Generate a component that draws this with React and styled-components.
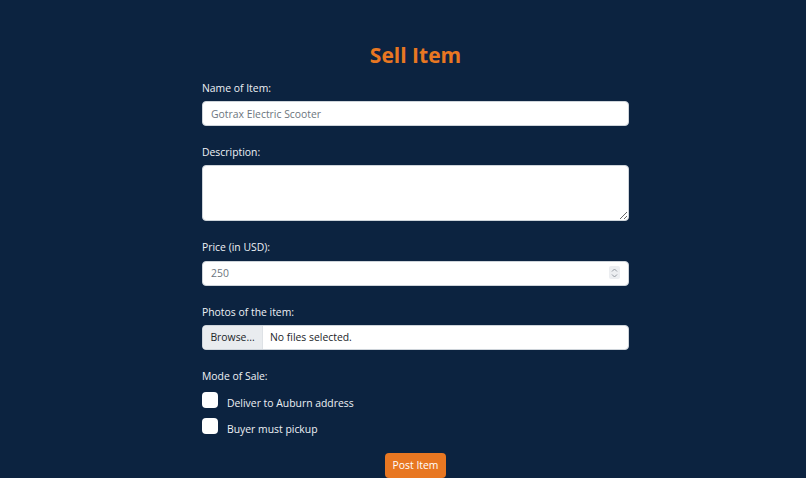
import React from "react";
import styled, { createGlobalStyle } from "styled-components";

const Global = createGlobalStyle`
  html, body { margin: 0; padding: 0; background: #0c2340; }
  body { font-family: "Open Sans", "Noto Sans", sans-serif; }
`;

const Page = styled.div`
  min-height: 478px;
  background: #0c2340;
  display: flex;
  justify-content: center;
  padding: 42px 0 0 25px;
  box-sizing: border-box;
`;

const Form = styled.form`
  width: 427px;
  display: flex;
  flex-direction: column;
`;

const Title = styled.h2`
  margin: 0 0 13px;
  text-align: center;
  color: #e87722;
  font-family: "Open Sans", sans-serif;
  font-weight: 700;
  font-size: 21px;
  line-height: 26px;
`;

const Group = styled.div`
  display: flex;
  flex-direction: column;
  margin-bottom: 19px;
`;

const Label = styled.label`
  color: #eef1f5;
  font-size: 10.4px;
  line-height: 14px;
  margin-bottom: 6px;
`;

const fieldBase = `
  box-sizing: border-box;
  width: 100%;
  background: #fff;
  border: 1px solid #ced4da;
  border-radius: 4px;
  font-family: "Open Sans", sans-serif;
  font-size: 10.4px;
  color: #212529;
  outline: none;
`;

const Input = styled.input`
  ${fieldBase}
  height: ${(p) => p.$h || 25}px;
  padding: 0 8px;
  &::placeholder { color: #6c757d; }
`;

const TextArea = styled.textarea`
  ${fieldBase}
  height: 56px;
  padding: 4px 8px;
  resize: vertical;
  display: block;
`;

const NumberWrap = styled.div`
  position: relative;
`;

const Spinner = styled.span`
  position: absolute;
  right: 9px;
  top: 6px;
  width: 11px;
  height: 13px;
  background: #eceef1;
  border-radius: 2px;
  display: flex;
  align-items: center;
  justify-content: center;
`;

const FileBox = styled.div`
  box-sizing: border-box;
  height: 25px;
  display: flex;
  align-items: stretch;
  background: #fff;
  border: 1px solid #ced4da;
  border-radius: 4px;
  overflow: hidden;
  font-size: 10.4px;
  color: #212529;
`;

const BrowseBtn = styled.span`
  width: 59px;
  background: #e9ecef;
  border-right: 1px solid #dee2e6;
  display: flex;
  align-items: center;
  justify-content: center;
  color: #212529;
`;

const FileName = styled.span`
  display: flex;
  align-items: center;
  padding-left: 7px;
`;

const CheckRow = styled.label`
  display: flex;
  align-items: center;
  gap: 9px;
  color: #eef1f5;
  font-size: 10.4px;
  line-height: 14px;
  margin-bottom: 10px;
`;

const Box = styled.span`
  width: 16px;
  height: 16px;
  background: #fff;
  border-radius: 4px;
  flex: none;
  position: relative;
  top: -3px;
`;

const Modes = styled.div`
  display: flex;
  flex-direction: column;
`;

const ModeLabel = styled(Label)`
  margin-bottom: 12px;
`;

const Submit = styled.button`
  align-self: center;
  margin-top: 6px;
  height: 25px;
  width: 61px;
  padding: 0;
  border: none;
  border-radius: 4px;
  background: #e87722;
  color: #fff;
  font-family: "Open Sans", sans-serif;
  font-size: 10.4px;
`;

export default function App() {
  return (
    <>
      <Global />
      <Page>
        <Form onSubmit={(e) => e.preventDefault()}>
          <Title>Sell Item</Title>
          <Group>
            <Label>Name of Item:</Label>
            <Input placeholder="Gotrax Electric Scooter" />
          </Group>
          <Group>
            <Label>Description:</Label>
            <TextArea />
          </Group>
          <Group>
            <Label>Price (in USD):</Label>
            <NumberWrap>
              <Input placeholder="250" $h={25} />
              <Spinner>
                <svg width="7" height="10" viewBox="0 0 7 10" fill="none" stroke="#8a9099" strokeWidth="0.9">
                  <path d="M1 3.5 L3.5 1 L6 3.5" />
                  <path d="M1 6.5 L3.5 9 L6 6.5" />
                </svg>
              </Spinner>
            </NumberWrap>
          </Group>
          <Group>
            <Label>Photos of the item:</Label>
            <FileBox>
              <BrowseBtn>Browse...</BrowseBtn>
              <FileName>No files selected.</FileName>
            </FileBox>
          </Group>
          <Modes>
            <ModeLabel>Mode of Sale:</ModeLabel>
            <CheckRow>
              <Box />
              Deliver to Auburn address
            </CheckRow>
            <CheckRow>
              <Box />
              Buyer must pickup
            </CheckRow>
          </Modes>
          <Submit type="submit">Post Item</Submit>
        </Form>
      </Page>
    </>
  );
}
